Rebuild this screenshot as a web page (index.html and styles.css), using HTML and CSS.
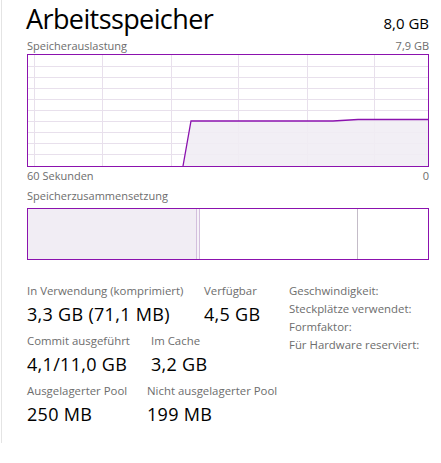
FILE: index.html
```html
<!DOCTYPE html>
<html lang="de">
<head>
<meta charset="utf-8">
<title>Arbeitsspeicher</title>
<link rel="stylesheet" href="styles.css">
</head>
<body>
<div class="panel">
  <div class="header">
    <div class="title">Arbeitsspeicher</div>
    <div class="total">8,0 GB</div>
  </div>
  <div class="labelrow">
    <span>Speicherauslastung</span>
    <span>7,9 GB</span>
  </div>
  <div class="graph">
    <svg width="400" height="111" viewBox="0 0 400 111">
      <g class="grid">
        <line x1="6.5" y1="0" x2="6.5" y2="111"/>
        <line x1="74.5" y1="0" x2="74.5" y2="111"/>
        <line x1="143.5" y1="0" x2="143.5" y2="111"/>
        <line x1="210.5" y1="0" x2="210.5" y2="111"/>
        <line x1="279.5" y1="0" x2="279.5" y2="111"/>
        <line x1="346.5" y1="0" x2="346.5" y2="111"/>
        <line x1="0" y1="11.5" x2="400" y2="11.5"/>
        <line x1="0" y1="22.5" x2="400" y2="22.5"/>
        <line x1="0" y1="33.5" x2="400" y2="33.5"/>
        <line x1="0" y1="44.5" x2="400" y2="44.5"/>
        <line x1="0" y1="55.5" x2="400" y2="55.5"/>
        <line x1="0" y1="66.5" x2="400" y2="66.5"/>
        <line x1="0" y1="77.5" x2="400" y2="77.5"/>
        <line x1="0" y1="88.5" x2="400" y2="88.5"/>
        <line x1="0" y1="99.5" x2="400" y2="99.5"/>
      </g>
      <polygon class="area" points="155,111 163,66 305,66 330,64.5 400,64.5 400,111"/>
      <polyline class="line" points="155,111 163,66 305,66 330,64.5 400,64.5"/>
    </svg>
  </div>
  <div class="labelrow axis">
    <span>60 Sekunden</span>
    <span>0</span>
  </div>
  <div class="labelrow section">
    <span>Speicherzusammensetzung</span>
  </div>
  <div class="compbar">
    <div class="seg inuse"></div>
    <div class="seg modified"></div>
    <div class="seg standby"></div>
    <div class="seg free"></div>
  </div>
  <div class="stats">
    <div class="left">
      <div class="row">
        <div class="stat w1">
          <div class="lbl">In Verwendung (komprimiert)</div>
          <div class="val">3,3 GB (71,1 MB)</div>
        </div>
        <div class="stat">
          <div class="lbl">Verfügbar</div>
          <div class="val">4,5 GB</div>
        </div>
      </div>
      <div class="row">
        <div class="stat w2">
          <div class="lbl">Commit ausgeführt</div>
          <div class="val">4,1/11,0 GB</div>
        </div>
        <div class="stat">
          <div class="lbl">Im Cache</div>
          <div class="val">3,2 GB</div>
        </div>
      </div>
      <div class="row">
        <div class="stat w3">
          <div class="lbl">Ausgelagerter Pool</div>
          <div class="val">250 MB</div>
        </div>
        <div class="stat">
          <div class="lbl">Nicht ausgelagerter Pool</div>
          <div class="val">199 MB</div>
        </div>
      </div>
    </div>
    <div class="right">
      <div class="lbl">Geschwindigkeit:</div>
      <div class="lbl">Steckplätze verwendet:</div>
      <div class="lbl">Formfaktor:</div>
      <div class="lbl">Für Hardware reserviert:</div>
    </div>
  </div>
</div>
</body>
</html>
```
FILE: styles.css
```css
html, body {
  margin: 0;
  padding: 0;
  background: #ffffff;
}
body {
  font-family: "Open Sans", "Noto Sans", sans-serif;
  color: #000;
}
.panel {
  margin-left: 1px;
  border-left: 1px solid #e4e4e4;
  height: 443px;
  width: 402px;
  padding-left: 25px;
  box-sizing: content-box;
}
.header {
  display: flex;
  justify-content: space-between;
  align-items: baseline;
  padding-top: 1px;
  height: 37px;
}
.title {
  font-size: 27px;
  line-height: 36px;
  letter-spacing: -0.6px;
  margin-left: -1px;
}
.total {
  font-size: 15px;
  line-height: 36px;
}
.labelrow {
  display: flex;
  justify-content: space-between;
  font-size: 11px;
  line-height: 16px;
  color: #6d6d6d;
}
.graph {
  border: 1px solid #8b12ae;
  width: 400px;
  height: 111px;
}
.graph svg {
  display: block;
}
.grid line {
  stroke: #e8e0ec;
  stroke-width: 1;
}
.area {
  fill: #f1edf4;
  fill-opacity: 0.9;
}
.line {
  fill: none;
  stroke: #8b12ae;
  stroke-width: 1.3;
}
.axis {
  margin-top: 1px;
}
.section {
  margin-top: 4px;
  height: 20px;
}
.compbar {
  display: flex;
  border: 1px solid #8b12ae;
  width: 400px;
  height: 50px;
}
.seg {
  height: 100%;
  box-sizing: border-box;
}
.inuse {
  width: 168px;
  background: #f1edf4;
}
.modified {
  width: 4px;
  background: #f6f2f8;
  border-left: 1px solid #d3bfdd;
  border-right: 1px solid #d3bfdd;
}
.standby {
  width: 157px;
  background: #fff;
}
.free {
  flex: 1;
  border-left: 1px solid #c4bcc8;
  background: #fff;
}
.stats {
  display: flex;
  margin-top: 22px;
}
.left {
  display: flex;
  flex-direction: column;
  width: 262px;
}
.row {
  display: flex;
  height: 50px;
}
.stat {
  display: flex;
  flex-direction: column;
}
.w1 { width: 177px; }
.w2 { width: 124px; }
.w3 { width: 120px; }
.lbl {
  font-size: 11.4px;
  line-height: 17px;
  color: #6d6d6d;
  white-space: nowrap;
}
.val {
  font-size: 18px;
  line-height: 27px;
  margin-top: 2px;
  letter-spacing: 0.3px;
  color: #000;
  white-space: nowrap;
}
.right {
  display: flex;
  flex-direction: column;
}
.right .lbl {
  line-height: 18px;
}
```
